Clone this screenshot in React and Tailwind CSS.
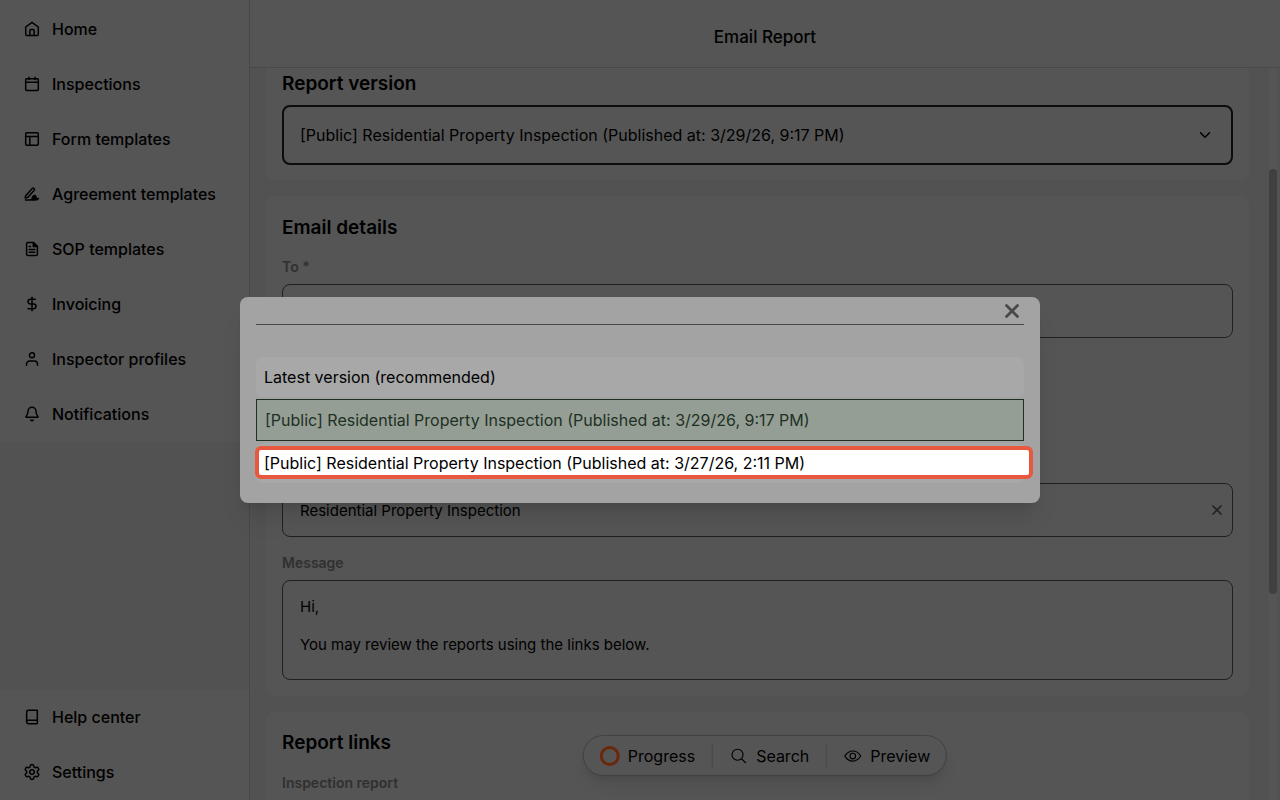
import { useState } from 'react'
import { Bell, Book, DollarSign, Settings, X } from 'lucide-react'
import { IoChevronDown, IoEyeOutline, IoSearchOutline } from 'react-icons/io5'

function Icon16({ children }) {
  return (
    <svg width="16" height="16" viewBox="0 0 16 16" fill="none" stroke="currentColor" strokeWidth="1.5" strokeLinecap="round" strokeLinejoin="round">
      {children}
    </svg>
  )
}

function HomeIcon() {
  return (
    <Icon16>
      <path d="M1.7 6 8 1.4 14.3 6v7.3a1.3 1.3 0 0 1-1.3 1.300H3a1.3 1.3 0 0 1-1.3-1.300z" />
      <path d="M5.9 14.5V9.4a1 1 0 0 1 1-1h2.200a1 1 0 0 1 1 1v5.100" />
    </Icon16>
  )
}

function CalendarIcon() {
  return (
    <Icon16>
      <rect x="1.7" y="2.8" width="12.6" height="11.8" rx="1" />
      <path d="M1.7 6.3h12.600M5 1.2v2.400M11 1.2v2.400" />
    </Icon16>
  )
}

function LayoutIcon() {
  return (
    <Icon16>
      <rect x="1.7" y="1.7" width="12.6" height="12.6" rx="1.2" />
      <path d="M1.7 5.4h12.600M5.8 5.4v8.900" />
    </Icon16>
  )
}

function SignIcon() {
  return (
    <Icon16>
      <path d="M1.6 9.8 8.3 2.5a1.3 1.3 0 0 1 1.9 1.800L3.7 11.4l-2.5.7z" />
      <path d="M1.5 14h4.300c1.3 0 2.2-.3 2.9-1" />
      <path d="M8 13c.3-2.5 1.7-3.7 3.1-3.4 1.3.3.6 1.9 1.2 2.6.4.5 1.2.6 2.2.4-.8 1-1.9 1.4-3.1 1.400H8z" fill="currentColor" />
    </Icon16>
  )
}

function DocumentIcon() {
  return (
    <Icon16>
      <path d="M3.7 1.5h5.800l3.9 3.900v7.800a1.3 1.3 0 0 1-1.3 1.300H3.9a1.3 1.3 0 0 1-1.3-1.300V2.6a1.1 1.1 0 0 1 1.1-1.100z" />
      <path d="M9.3 1.7v3.800h3.900z" fill="currentColor" />
      <path d="M5.2 5.5h1.200M5.2 8.4h5.600M5.2 11.2h5.600" />
    </Icon16>
  )
}

function UserIcon() {
  return (
    <Icon16>
      <circle cx="8" cy="4.2" r="2.5" />
      <path d="M2.5 14.3v-1.100A3.2 3.2 0 0 1 5.7 10h4.600a3.2 3.2 0 0 1 3.2 3.200v1.100" />
    </Icon16>
  )
}

const mainLinks = [
  { label: 'Home', icon: <HomeIcon /> },
  { label: 'Inspections', icon: <CalendarIcon /> },
  { label: 'Form templates', icon: <LayoutIcon /> },
  { label: 'Agreement templates', icon: <SignIcon /> },
  { label: 'SOP templates', icon: <DocumentIcon /> },
  { label: 'Invoicing', icon: <DollarSign size={16} strokeWidth={2.25} /> },
  { label: 'Inspector profiles', icon: <UserIcon /> },
  { label: 'Notifications', icon: <Bell size={16} strokeWidth={2.25} /> }
]

const footerLinks = [
  { label: 'Help center', icon: <Book size={16} strokeWidth={2.25} /> },
  { label: 'Settings', icon: <Settings size={18} className="-m-px" /> }
]

const versions = [
  'Latest version (recommended)',
  '[Public] Residential Property Inspection (Published at: 3/29/26, 9:17 PM)',
  '[Public] Residential Property Inspection (Published at: 3/27/26, 2:11 PM)'
]

function NavLinks({ links }) {
  return links.map(({ label, icon }) => (
    <a key={label} href="#" className="flex h-[55px] items-center gap-3 px-6 pb-0.5 font-medium">
      {icon}
      {label}
    </a>
  ))
}

function Sidebar() {
  return (
    <aside className="flex w-[250px] shrink-0 flex-col justify-between border-r border-[#484848] bg-[#525252]">
      <nav className="bg-[#555555] pt-0.5">
        <NavLinks links={mainLinks} />
      </nav>
      <nav className="bg-[#555555]">
        <NavLinks links={footerLinks} />
      </nav>
    </aside>
  )
}

function Heading({ children }) {
  return <h2 className="text-[19px] leading-6 font-semibold">{children}</h2>
}

function Label({ htmlFor, children }) {
  return (
    <label htmlFor={htmlFor} className="mb-[7px] block text-sm leading-5 font-semibold text-[#303030]">
      {children}
    </label>
  )
}

function ReportVersion({ value, onChange }) {
  return (
    <section className="rounded-b-lg bg-[#555555] px-4 pt-1 pb-[15px]">
      <Heading>Report version</Heading>
      <div className="relative mt-[9px]">
        <select
          aria-label="Report version"
          className="h-[60px] w-full appearance-none rounded-lg border-2 border-[#0c0c0c] bg-transparent px-4"
          value={value}
          onChange={e => onChange(e.target.value)}
        >
          {versions.map(version => (
            <option key={version}>{version}</option>
          ))}
        </select>
        <IoChevronDown size={16} className="pointer-events-none absolute top-[22px] right-5" />
      </div>
    </section>
  )
}

function EmailDetails() {
  const [to, setTo] = useState('')
  const [subject, setSubject] = useState('Residential Property Inspection')
  const [message, setMessage] = useState('Hi,\n\nYou may review the reports using the links below.')

  return (
    <section className="rounded-lg bg-[#555555] px-4 pt-5 pb-4">
      <Heading>Email details</Heading>
      <div className="mt-[17px]">
        <Label htmlFor="to">To *</Label>
        <input
          id="to"
          className="h-[54px] w-full rounded-lg border border-[#202020] px-[17px] text-[15px]"
          value={to}
          onChange={e => setTo(e.target.value)}
        />
      </div>
      <div className="relative mt-[145px]">
        <input
          aria-label="Subject"
          className="h-[54px] w-full rounded-lg border border-[#202020] px-[17px] text-[15px]"
          value={subject}
          onChange={e => setSubject(e.target.value)}
        />
        <button
          type="button"
          aria-label="Clear subject"
          className="absolute top-[19px] right-2 text-[#222222]"
          onClick={() => setSubject('')}
        >
          <X size={16} strokeWidth={2.5} />
        </button>
      </div>
      <div className="mt-4">
        <Label htmlFor="message">Message</Label>
        <textarea
          id="message"
          className="block h-[100px] w-full resize-none rounded-lg border border-[#202020] px-[17px] py-4 text-[15px] leading-[19px]"
          value={message}
          onChange={e => setMessage(e.target.value)}
        />
      </div>
    </section>
  )
}

function ReportLinks() {
  return (
    <section className="rounded-t-lg bg-[#555555] px-4 pt-[19px] pb-10">
      <Heading>Report links</Heading>
      <p className="mt-[18px] text-sm leading-5 font-semibold text-[#303030]">Inspection report</p>
    </section>
  )
}

function Toolbar() {
  return (
    <div className="absolute bottom-6 left-1/2 flex h-[41px] -translate-x-1/2 items-center rounded-full border border-[#414141] bg-[#555555] px-4 text-base shadow-lg">
      <button type="button" className="flex items-center gap-2 pr-[17px]">
        <span className="size-5 rounded-full border-3 border-[#6b260b]" />
        Progress
      </button>
      <button type="button" className="flex items-center gap-2 border-l border-[#484848] px-[17px]">
        <IoSearchOutline size={18} />
        Search
      </button>
      <button type="button" className="flex items-center gap-2 border-l border-[#484848] pl-[17px]">
        <IoEyeOutline size={18} />
        Preview
      </button>
    </div>
  )
}

function VersionDialog({ value, onChange }) {
  return (
    <div className="absolute inset-0 flex items-center justify-center">
      <div role="dialog" aria-label="Select report version" className="w-[800px] rounded-lg bg-[#a3a3a3] px-4 pb-5 shadow-xl">
        <div className="flex h-7 items-center justify-end border-b border-[#484848]">
          <button type="button" aria-label="Close" className="text-[#484848]">
            <X size={24} strokeWidth={3} className="p-px" />
          </button>
        </div>
        <div className="mt-8 flex flex-col gap-0.5">
          {versions.map((version, i) => (
            <label
              key={version}
              className={
                value === version
                  ? 'relative border border-[#1e3022] bg-[#949e95] p-2 text-[#1e3022]'
                  : 'relative rounded-lg bg-[#a8a8a8] p-2'
              }
            >
              <input
                type="radio"
                name="version"
                className="sr-only"
                checked={value === version}
                onChange={() => onChange(version)}
              />
              {i === 2 && (
                <span className="absolute top-[3px] -right-[9px] bottom-1 -left-px rounded-md border-4 border-[#e8583f] bg-white" />
              )}
              <span className="relative">{version}</span>
            </label>
          ))}
        </div>
      </div>
    </div>
  )
}

export default function App() {
  const [version, setVersion] = useState(versions[1])

  return (
    <div className="relative flex h-screen overflow-hidden bg-[#525252] font-['Inter',sans-serif] text-base text-black">
      <Sidebar />
      <main className="relative flex min-w-0 flex-1 flex-col">
        <header className="flex h-[68px] shrink-0 items-center justify-center border-b border-[#484848] bg-[#555555] pt-2">
          <h1 className="text-[17px] font-medium">Email Report</h1>
        </header>
        <div className="relative flex min-h-0 flex-1 flex-col gap-4 overflow-hidden pr-[31px] pl-4">
          <ReportVersion value={version} onChange={setVersion} />
          <EmailDetails />
          <ReportLinks />
          <div className="absolute top-0 right-[3px] bottom-0 w-2 bg-[#555555]">
            <div className="mt-[101px] h-[425px] rounded-full bg-[#404040]" />
          </div>
        </div>
        <Toolbar />
      </main>
      <VersionDialog value={version} onChange={setVersion} />
    </div>
  )
}
